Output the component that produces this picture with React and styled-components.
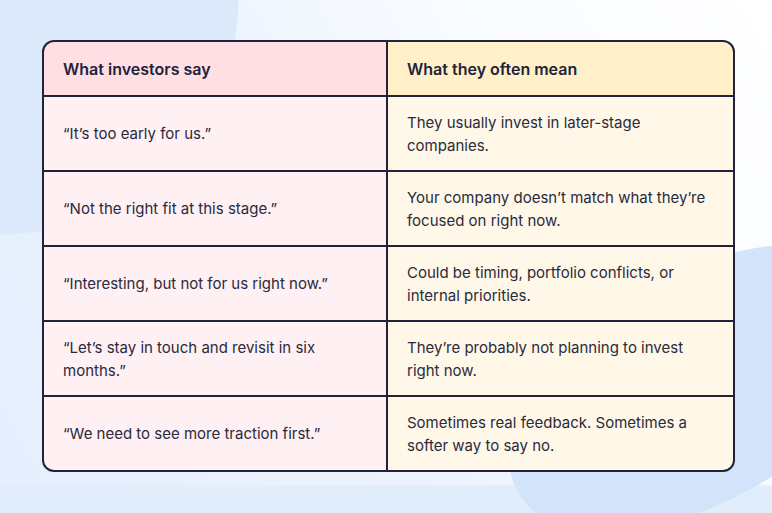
import React from 'react';
import styled, { createGlobalStyle } from 'styled-components';

const GlobalStyle = createGlobalStyle`
  * { box-sizing: border-box; }
  html, body {
    margin: 0;
    padding: 0;
  }
  body {
    font-family: Inter, "Noto Sans", "Liberation Sans", sans-serif;
    -webkit-font-smoothing: antialiased;
  }
`;

const rows = [
  {
    say: '“It’s too early for us.”',
    mean: 'They usually invest in later-stage companies.',
  },
  {
    say: '“Not the right fit at this stage.”',
    mean: 'Your company doesn’t match what they’re focused on right now.',
  },
  {
    say: '“Interesting, but not for us right now.”',
    mean: 'Could be timing, portfolio conflicts, or internal priorities.',
  },
  {
    say: '“Let’s stay in touch and revisit in six months.”',
    mean: 'They’re probably not planning to invest right now.',
  },
  {
    say: '“We need to see more traction first.”',
    mean: 'Sometimes real feedback. Sometimes a softer way to say no.',
  },
];

export default function App() {
  return (
    <Page>
      <GlobalStyle />
      <Table>
        <HeadCell tone="pink">What investors say</HeadCell>
        <HeadCell tone="yellow">What they often mean</HeadCell>
        {rows.map((row) => (
          <React.Fragment key={row.say}>
            <Cell tone="pink">{row.say}</Cell>
            <Cell tone="yellow">{row.mean}</Cell>
          </React.Fragment>
        ))}
      </Table>
    </Page>
  );
}

const Page = styled.div`
  position: relative;
  width: 772px;
  height: 513px;
  overflow: hidden;
  padding: 40px 0 0 42px;
  background:
    radial-gradient(ellipse 239px 235px at 0px 0px, #dce9fb 0 99.4%, transparent 100%),
    linear-gradient(to bottom, transparent 0 484px, #e2edfc 486px),
    linear-gradient(60deg, #e4eefd 0%, #ecf3fe 42%, #f8fbff 68%, #ffffff 100%);

  /* soft blob behind the bottom right of the table */
  &::after {
    content: '';
    position: absolute;
    left: 490px;
    top: 275px;
    width: 420px;
    height: 226px;
    border-radius: 50%;
    background: #d3e3fa;
    transform: rotate(-30deg);
    z-index: 0;
  }
`;

const Table = styled.div`
  position: relative;
  z-index: 1;
  width: 693px;
  display: grid;
  grid-template-columns: 342px 345px;
  grid-template-rows: 53px repeat(5, 73px);
  gap: 2px;
  background: #22223a;
  border: 2px solid #22223a;
  border-radius: 12px;
  overflow: hidden;
`;

const Cell = styled.div`
  display: flex;
  align-items: center;
  padding: 0 19px;
  font-size: 15px;
  line-height: 23px;
  color: #2a2a3c;
  background: ${(p) => (p.tone === 'pink' ? '#fff0f3' : '#fff8e8')};
`;

const HeadCell = styled(Cell)`
  padding-top: 1px;
  font-size: 16px;
  font-weight: 600;
  color: #22223a;
  background: ${(p) => (p.tone === 'pink' ? '#ffdee4' : '#fff0c9')};
`;
